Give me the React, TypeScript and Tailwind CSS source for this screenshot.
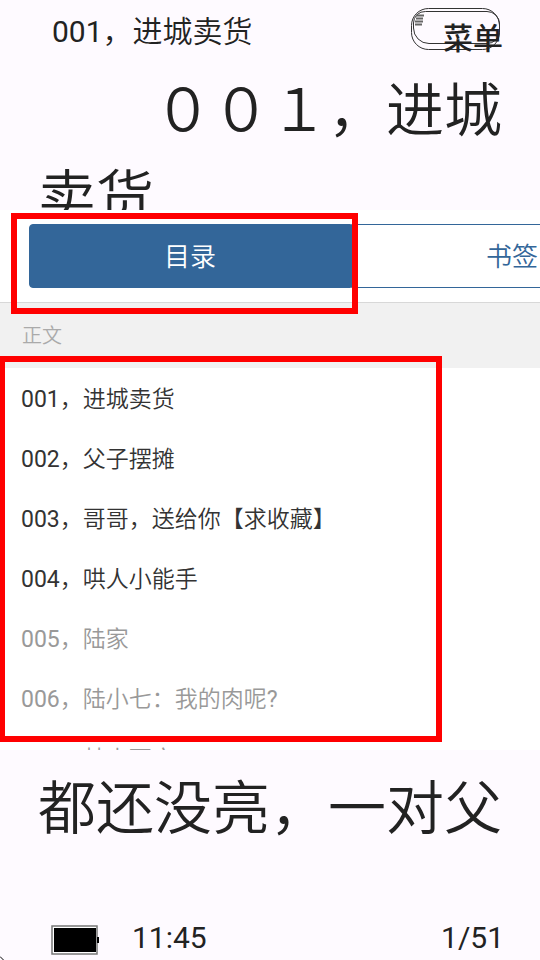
import { useState } from "react";

interface Chapter {
  title: string;
  locked?: boolean; // capítulos aún no leídos, en gris
}

const CHAPTERS: Chapter[] = [
  { title: "001，进城卖货" },
  { title: "002，父子摆摊" },
  { title: "003，哥哥，送给你【求收藏】" },
  { title: "004，哄人小能手" },
  { title: "005，陆家", locked: true },
  { title: "006，陆小七：我的肉呢?", locked: true },
  { title: "007，林小西方", locked: true },
];

const TABS = ["目录", "书签"];

/** Botón de menú con doble contorno */
function MenuButton() {
  return (
    <button
      type="button"
      className="relative mr-[37px] flex h-12 w-[92px] items-end justify-end"
    >
      <svg
        className="absolute inset-0 h-full w-full overflow-visible"
        viewBox="0 0 92 48"
        fill="none"
        stroke="#333"
        aria-hidden="true"
      >
        <rect x="0.5" y="0.5" width="88" height="41" rx="17" />
        <path d="M14.5 3.5H76a12.5 12.5 0 0 1 12.5 12.5v7a12.5 12.5 0 0 1-12.5 12.5H18A15.5 15.5 0 0 1 2.5 20v-5A11.5 11.5 0 0 1 14.5 3.5z" />
        <path d="M5 7.5h8M5 10.5h7M4 13.5h8M4 16.5h7" stroke="#666" strokeWidth="2" />
      </svg>
      <span className="relative font-['Noto_Sans_CJK_SC',sans-serif] text-3xl leading-10 font-medium whitespace-nowrap">
        菜单
      </span>
    </button>
  );
}

function BatteryIcon() {
  return (
    <svg width="48" height="34" viewBox="0 0 48 34" aria-hidden="true">
      <rect x="1" y="5" width="45" height="28" fill="#fff" stroke="#777" strokeWidth="1.5" />
      <rect x="3" y="7" width="42" height="24" fill="#000" />
      <rect x="46" y="16" width="2" height="6" fill="#000" />
    </svg>
  );
}

export default function App() {
  const [activeTab, setActiveTab] = useState(0);

  return (
    <main
      lang="zh-CN"
      className="relative flex min-h-screen flex-col overflow-hidden bg-[#fefaff] font-[Roboto,'Noto_Sans_CJK_SC_DemiLight','Noto_Sans_CJK_SC',sans-serif] text-[#222]"
    >
      <header className="flex h-[68px] items-start justify-between pt-2 pl-[52px]">
        <h1 className="text-3xl leading-12">001，进城卖货</h1>
        <MenuButton />
      </header>

      {/* Texto del libro, cortado por el panel */}
      <p className="h-[142px] overflow-hidden px-[38px] indent-[116px] text-[58px] leading-[87px] break-all">
        ００１，进城卖货
      </p>

      {/* Panel del índice */}
      <section className="h-[540px] overflow-hidden bg-white">
        <div role="tablist" className="ml-[29px] py-3.5">
          <div className="flex w-[126%]">
            {TABS.map((tab, i) => (
              <button
                key={tab}
                type="button"
                role="tab"
                aria-selected={activeTab === i}
                onClick={() => setActiveTab(i)}
                className={`h-16 flex-1 border border-[#336699] pt-0.5 text-[26px] first:rounded-l last:rounded-r ${
                  activeTab === i ? "bg-[#336699] text-white" : "bg-white text-[#336699]"
                }`}
              >
                {tab}
              </button>
            ))}
          </div>
        </div>
        <h2 className="h-[66px] border-t border-[#d8d8d8] bg-[#f1f1f1] pl-[22px] text-xl leading-[66px] text-[#aaa]">
          正文
        </h2>
        <ul>
          {CHAPTERS.map((chapter) => (
            <li key={chapter.title}>
              <a
                href="#"
                className={`block h-[60px] pl-[21px] text-[23px] leading-16 whitespace-nowrap ${
                  chapter.locked ? "text-[#999]" : "text-[#333]"
                }`}
              >
                {chapter.title}
              </a>
            </li>
          ))}
        </ul>
      </section>

      <p className="mt-4 px-[38px] text-[58px] leading-[87px] whitespace-nowrap">都还没亮，一对父</p>

      <footer className="mt-auto flex h-11 items-center pr-9 pl-[51px] text-3xl">
        <BatteryIcon />
        <time className="ml-[33px]">11:45</time>
        <span className="ml-auto">1/51</span>
      </footer>

      {/* Borde redondeado en la esquina inferior */}
      <svg className="absolute bottom-0 left-0" width="4" height="4" viewBox="0 0 4 4" aria-hidden="true">
        <path d="M0 0.5L3.5 4" stroke="#000" fill="none" />
      </svg>

      {/* Marcos rojos que señalan la pestaña y la lista */}
      <div className="pointer-events-none absolute top-[213px] left-[11px] h-[101px] w-[347px] border-6 border-[#ff0000]" />
      <div className="pointer-events-none absolute top-[356px] -left-px h-[386px] w-[443px] border-6 border-[#ff0000]" />
    </main>
  );
}
